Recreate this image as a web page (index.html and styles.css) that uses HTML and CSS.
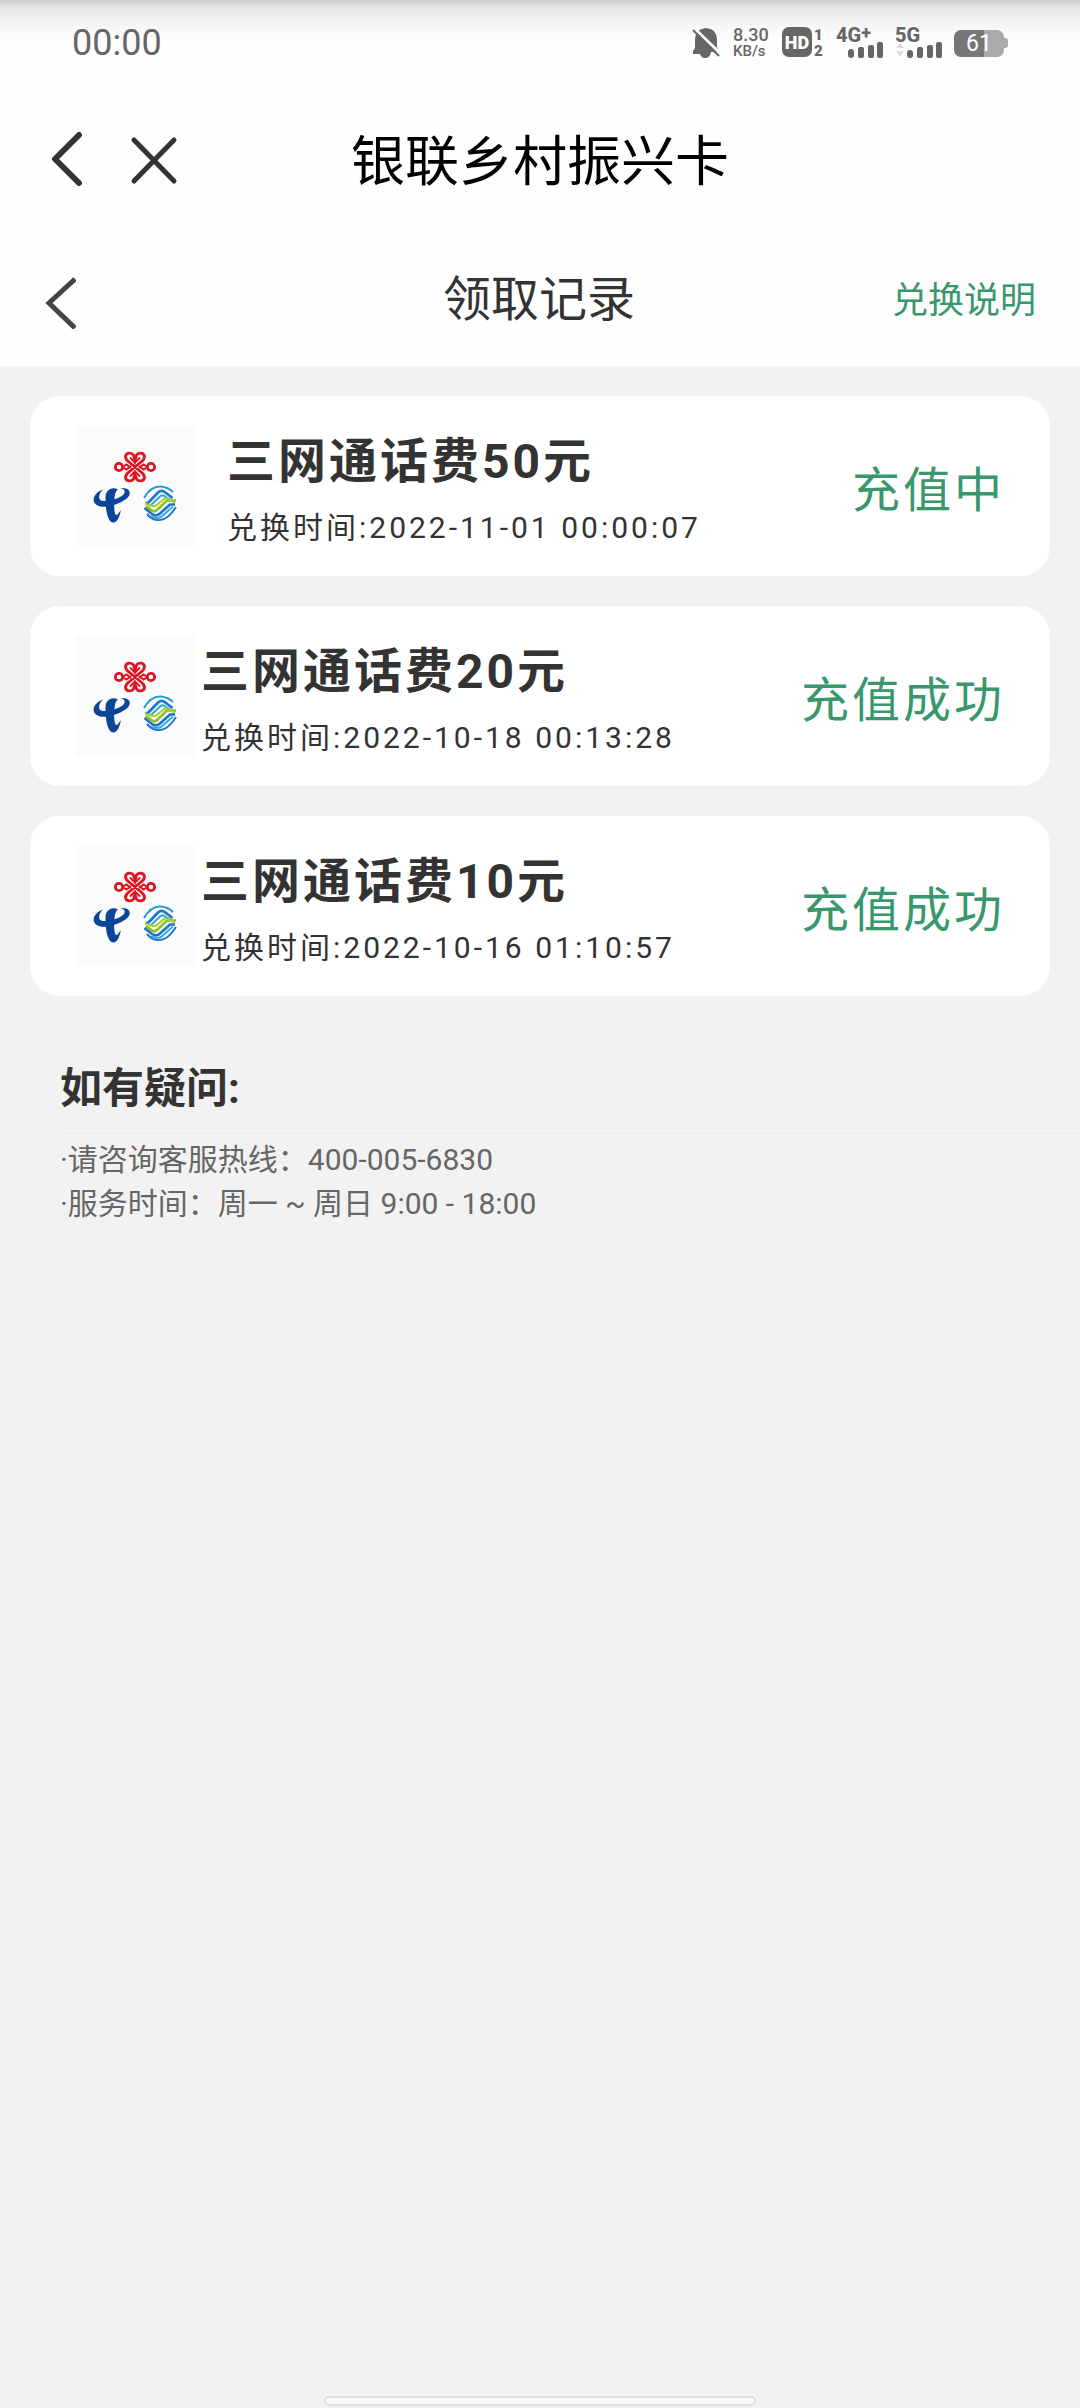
FILE: index.html
```html
<!DOCTYPE html>
<html lang="zh-CN">
<head>
<meta charset="utf-8">
<meta name="viewport" content="width=device-width, initial-scale=1">
<title>领取记录</title>
<link rel="stylesheet" href="styles.css">
</head>
<body>
<svg class="defs" aria-hidden="true">
  <symbol id="carriers" viewBox="0 0 120 120">
    <g fill="none" stroke="#dc1620" stroke-width="2.8">
      <circle cx="44" cy="41" r="3.700"/>
      <circle cx="76" cy="41" r="3.700"/>
      <path d="M60 34.500L58.500 29C56.500 26 51 26.500 50.500 30.500C50.500 33.500 52 34.500 54 36L66 46C68 47.500 69.500 48.500 69.500 51.500C69 55.500 63.500 56 61.500 53L60 48L58.500 53C56.500 56 51 55.500 50.500 51.500C50.500 48.500 52 47.500 54 46L66 36C68 34.500 69.500 33.500 69.500 30.500C69 26.500 63.500 26 61.500 29Z"/>
      <path d="M47.500 41L51.500 38.500L56 42M47.500 41L51.500 43.500L56 40M72.500 41L68.500 38.500L64 42M72.500 41L68.500 43.500L64 40M55 31.500L60 36.500L65 31.500M55 50.500L60 45.500L65 50.500" stroke-width="2"/>
    </g>
    <g fill="#0b4599">
      <path d="M28 63.500C20 66 15.500 74 21 78.500C25 82 33 81 39 79C48 76 56.500 71 54.500 65.500C53.500 62.500 50 62 45.500 62C50 63.500 51 66 48 69C44 72.500 35 75 28.500 75C23 75 22.500 68.500 28 63.500Z"/>
      <path d="M43 63.500C37 60 30.500 64 30.500 71C30.500 78 31 86 33 91C34.500 96 38 98 41 95.500C44 93 45 88 46 84C43.500 87 42.500 89.500 41 89C39 88 38.500 75 40 69C40.500 66.500 41 64.500 43 63.500Z"/>
    </g>
    <g fill="none" stroke-width="2.700" stroke-linejoin="round">
      <path d="M69 72C73 65 79 60 86 60.500C91 61 95 63 98 66" stroke="#259bd8" stroke-width="2"/>
      <path d="M70.500 77H73L83 66.500Q87 63 91 67L97.500 72" stroke="#1d75cf"/>
      <path d="M75 80L85 70.500Q87.500 68 91 71L97 74.500" stroke="#31a8dc" stroke-width="2"/>
      <path d="M71 80L77 84.500Q79.500 86.500 82.500 83.500L92 74.500H101" stroke="#8fc31f"/>
      <path d="M70 77.500L78 80Q80 81 83 78L89 73Q92 71 100 77" stroke="#a7cf2d" stroke-width="2"/>
      <path d="M69.500 82L77 88Q81 91 85 87.500L95 78.500H100" stroke="#1d75cf"/>
      <path d="M72 88C77 94 84 96 91 92C96 89 99 84 101 81" stroke="#1d75cf" stroke-width="2"/>
      <path d="M76 90Q81 93.500 86 91L98 80.500" stroke="#31a8dc" stroke-width="2"/>
    </g>
  </symbol>
</svg>

<div class="page">
  <header class="top">
    <div class="status-bar">
      <span class="clock">00:00</span>
      <div class="indicators">
        <svg class="bell" viewBox="0 0 28 30" aria-hidden="true">
          <path d="M14 0Q25 1 25 12V19L27 24H19Q18 30 13 30Q9 30 8 26H1V23L3 20V12Q3 1 14 0Z" fill="#666"/>
          <path d="M2 0L29 26" stroke="#fafafa" stroke-width="3"/>
          <path d="M1 2L27 28" stroke="#666" stroke-width="2"/>
        </svg>
        <span class="speed"><span class="rate">8.30</span><span class="unit">KB/s</span></span>
        <span class="hd-group"><span class="hd">HD</span><span class="sims"><span>1</span><span>2</span></span></span>
        <span class="signal">
          <span class="net">4G<sup>+</sup></span>
          <svg class="bars" viewBox="0 0 48 16" aria-hidden="true">
            <g fill="#666"><rect x="12" y="7" width="6" height="9" rx="3"/><rect x="22" y="5" width="6" height="11" rx="2"/><rect x="32" y="3" width="6" height="13" rx="2"/><rect x="41" y="0" width="6" height="16" rx="2"/></g>
          </svg>
        </span>
        <span class="signal">
          <span class="net">5G</span>
          <svg class="bars" viewBox="0 0 48 16" aria-hidden="true">
            <path d="M1 6L5 1L9 6ZM1 9H9L5 15Z" fill="#ddd"/>
            <g fill="#666"><rect x="12" y="8" width="6" height="8" rx="3"/><rect x="22" y="5" width="6" height="11" rx="2"/><rect x="32" y="3" width="6" height="13" rx="2"/><rect x="41" y="0" width="6" height="16" rx="2"/></g>
          </svg>
        </span>
        <span class="battery"><span class="cell">61</span></span>
      </div>
    </div>

    <div class="bar app-bar">
      <div class="actions">
        <button type="button" aria-label="返回">
          <svg width="36" height="56" viewBox="0 0 36 56"><path d="M31 4L7 28L31 52" fill="none" stroke="#333" stroke-width="6" stroke-linecap="round" stroke-linejoin="round"/></svg>
        </button>
        <button type="button" aria-label="关闭">
          <svg width="48" height="56" viewBox="0 0 48 56"><path d="M4 9L44 50M44 9L4 50" fill="none" stroke="#333" stroke-width="5" stroke-linecap="round"/></svg>
        </button>
      </div>
      <h1 class="app-title">银联乡村振兴卡</h1>
      <span></span>
    </div>

    <nav class="bar sub-bar">
      <div class="actions">
        <button type="button" aria-label="返回">
          <svg width="34" height="60" viewBox="0 0 34 60"><path d="M33 10L7 34L33 59" fill="none" stroke="#444" stroke-width="5"/></svg>
        </button>
      </div>
      <h2 class="page-title">领取记录</h2>
      <a class="help-link" href="#help">兑换说明</a>
    </nav>
  </header>

  <main>
    <ul class="records">
      <li class="record pending">
        <svg class="logo" role="img" aria-label="三网运营商"><use href="#carriers"/></svg>
        <div class="info"><h3>三网通话费50元</h3><p>兑换时间:2022-11-01 00:00:07</p></div>
        <span class="state">充值中</span>
      </li>
      <li class="record">
        <svg class="logo" role="img" aria-label="三网运营商"><use href="#carriers"/></svg>
        <div class="info"><h3>三网通话费20元</h3><p>兑换时间:2022-10-18 00:13:28</p></div>
        <span class="state">充值成功</span>
      </li>
      <li class="record">
        <svg class="logo" role="img" aria-label="三网运营商"><use href="#carriers"/></svg>
        <div class="info"><h3>三网通话费10元</h3><p>兑换时间:2022-10-16 01:10:57</p></div>
        <span class="state">充值成功</span>
      </li>
    </ul>

    <section class="help" id="help">
      <h2>如有疑问:</h2>
      <p>·请咨询客服热线：400-005-6830</p>
      <p>·服务时间：周一 ~ 周日 9:00 - 18:00</p>
    </section>
  </main>

  <div class="home-bar"></div>
</div>
</body>
</html>
```

FILE: styles.css
```css
* {
  box-sizing: border-box;
  margin: 0;
  padding: 0;
}

body {
  background: #f2f2f2;
  color: #333;
  font-family: Roboto, "Noto Sans CJK SC", sans-serif;
}

button {
  display: flex;
  border: 0;
  background: none;
}

.defs {
  position: absolute;
  width: 0;
  height: 0;
}

.page {
  display: flex;
  flex-direction: column;
  min-height: 100vh;
}

.top {
  background: linear-gradient(#d0d0d0 0, #d4d4d4 3px, #e2e2e2 5px, #f0f0f0 18px, #fafafa 32px, #fefefe 42px);
}

/* System status bar */
.status-bar {
  display: flex;
  align-items: center;
  justify-content: space-between;
  height: 86px;
  padding: 0 72px;
  color: #666;
}

.clock {
  font-size: 36px;
}

.indicators {
  display: flex;
  align-items: center;
  height: 30px;
}

.bell {
  width: 28px;
  height: 30px;
  margin-right: 13px;
}

.speed {
  display: flex;
  flex-direction: column;
  width: 49px;
  font-weight: 500;
}

.rate {
  font-size: 18px;
  line-height: 16px;
}

.unit {
  font-size: 15px;
  line-height: 16px;
}

.hd-group {
  display: flex;
  gap: 2px;
  width: 54px;
}

.hd {
  width: 30px;
  height: 30px;
  border-radius: 7px;
  background: #666;
  color: #fff;
  font-size: 18px;
  font-weight: 900;
  line-height: 31px;
  text-align: center;
}

.sims {
  display: flex;
  flex-direction: column;
  align-items: center;
  font-size: 15px;
  font-weight: 900;
  line-height: 16px;
}

.signal {
  display: flex;
  flex-direction: column;
  justify-content: space-between;
  width: 59px;
  height: 30px;
}

.net {
  height: 14px;
  font-size: 20px;
  font-weight: 800;
  line-height: 15px;
}

.net sup {
  font-size: 18px;
  line-height: 1px;
  vertical-align: 3px;
}

.bars {
  width: 48px;
  height: 16px;
}

.battery {
  display: flex;
  align-items: center;
}

.battery::after {
  width: 4px;
  height: 10px;
  border-radius: 0 3px 3px 0;
  background: #aaa;
  content: "";
}

.cell {
  width: 50px;
  height: 27px;
  border-radius: 7px;
  background: linear-gradient(90deg, #777 61%, #aaa 61%);
  color: #fff;
  font-size: 23px;
  line-height: 28px;
  text-align: center;
}

/* Title bars */
.bar {
  display: grid;
  grid-template-columns: 1fr auto 1fr;
  align-items: center;
}

.bar h1,
.bar h2 {
  font-weight: 400;
}

.actions {
  display: flex;
  gap: 46px;
}

.app-bar {
  height: 146px;
  padding: 0 48px;
}

.app-title {
  padding-bottom: 4px;
  color: #000;
  font-size: 54px;
}

.sub-bar {
  height: 134px;
  padding: 0 44px 0 42px;
}

.page-title {
  padding-bottom: 8px;
  font-size: 48px;
}

.help-link {
  justify-self: end;
  padding-bottom: 4px;
  color: #38986b;
  font-size: 36px;
  text-decoration: none;
}

/* Records */
.records {
  display: flex;
  flex-direction: column;
  gap: 30px;
  padding: 30px;
  list-style: none;
}

.record {
  display: flex;
  align-items: center;
  gap: 6px;
  min-height: 180px;
  padding: 0 45px;
  border-radius: 30px;
  background: #fff;
  letter-spacing: 3px;
}

.pending {
  gap: 32px;
}

.logo {
  flex: none;
  width: 120px;
  height: 120px;
  background: #fbfbfb;
}

.info {
  flex: 1;
  padding-top: 4px;
}

.info h3 {
  font-size: 48px;
  line-height: 80px;
}

.info p {
  font-size: 30px;
  line-height: 52px;
}

.state {
  color: #38986b;
  font-size: 48px;
}

/* Support */
.help {
  padding: 20px 0 0 60px;
  color: #666;
  font-size: 30px;
  line-height: 44px;
}

.help h2 {
  margin-bottom: 4px;
  border-bottom: 2px solid #eee;
  color: #333;
  font-size: 42px;
  line-height: 86px;
}

.home-bar {
  align-self: center;
  width: 40%;
  height: 10px;
  margin: auto 0 2px;
  border: 2px solid #ddd;
  border-radius: 5px;
  background: #f9f9f9;
}
```
